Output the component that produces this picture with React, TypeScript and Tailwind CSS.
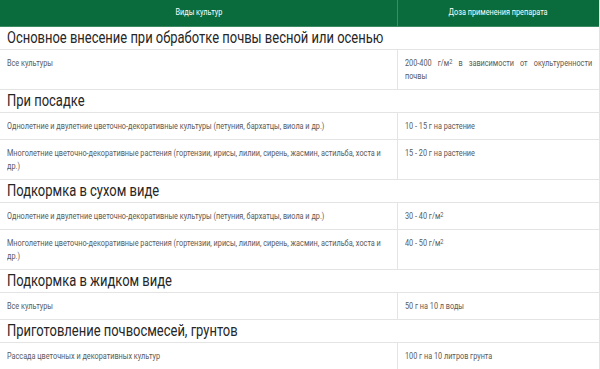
import React from "react";

type Row = { crop: React.ReactNode; dose: React.ReactNode; tall?: boolean };
type Section = { title: string; rows: Row[] };

// Roboto squeezed horizontally to stand in for Roboto Condensed
function Narrow({ w, className = "", children }: { w: string; className?: string; children: React.ReactNode }) {
  return <div className={`${w} origin-top-left scale-x-[0.81] ${className}`}>{children}</div>;
}

const Sup = () => <sup className="text-[7px] relative -top-[2px]">2</sup>;

const sections: Section[] = [
  {
    title: "Основное внесение при обработке почвы весной или осенью",
    rows: [
      {
        crop: "Все культуры",
        dose: (
          <span className="block text-justify [text-align-last:left]">
            200-400 г/м<Sup /> в зависимости от окультуренности почвы
          </span>
        ),
        tall: true,
      },
    ],
  },
  {
    title: "При посадке",
    rows: [
      { crop: "Однолетние и двулетние цветочно-декоративные культуры (петуния, бархатцы, виола и др.)", dose: "10 - 15 г на растение" },
      {
        crop: (
          <>
            Многолетние цветочно-декоративные растения (гортензии, ирисы, лилии, сирень, жасмин, астильба, хоста и<br />
            др.)
          </>
        ),
        dose: "15 - 20 г на растение",
        tall: true,
      },
    ],
  },
  {
    title: "Подкормка в сухом виде",
    rows: [
      {
        crop: "Однолетние и двулетние цветочно-декоративные культуры (петуния, бархатцы, виола и др.)",
        dose: (
          <>
            30 - 40 г/м<Sup />
          </>
        ),
      },
      {
        crop: (
          <>
            Многолетние цветочно-декоративные растения (гортензии, ирисы, лилии, сирень, жасмин, астильба, хоста и<br />
            др.)
          </>
        ),
        dose: (
          <>
            40 - 50 г/м<Sup />
          </>
        ),
        tall: true,
      },
    ],
  },
  {
    title: "Подкормка в жидком виде",
    rows: [{ crop: "Все культуры", dose: "50 г на 10 л воды" }],
  },
  {
    title: "Приготовление почвосмесей, грунтов",
    rows: [{ crop: "Рассада цветочных и декоративных культур", dose: "100 г на 10 литров грунта" }],
  },
];

export default function App() {
  return (
    <div className="w-[600px] h-[369px] overflow-hidden bg-white" style={{ fontFamily: "Roboto, 'Liberation Sans', sans-serif" }}>
      <div className="border-r border-[#e2e2e2]">
        <div className="flex h-[27px] bg-[#0a6b3c] text-white text-[9px] border-b border-[#3d8a63]">
          <div className="w-[398px] flex items-center justify-center border-r border-[#3d8a63]">
            <span className="inline-block scale-x-[0.81]">Виды культур</span>
          </div>
          <div className="flex-1 flex items-center justify-center">
            <span className="inline-block scale-x-[0.81]">Доза применения препарата</span>
          </div>
        </div>
        {sections.map((s) => (
          <div key={s.title}>
            <div className="h-[23px] px-[7px] flex items-center border-b border-[#e4e4e4] text-[16px] text-[#262626] leading-none overflow-hidden">
              <span className="inline-block whitespace-nowrap origin-left scale-x-[0.81]">{s.title}</span>
            </div>
            {s.rows.map((r, i) => (
              <div
                key={i}
                className={`flex border-b border-[#e4e4e4] text-[9px] leading-[13px] text-[#5a5a5a] ${r.tall ? "h-[40px]" : "h-[27px]"}`}
              >
                <div className="w-[398px] px-[7px] pt-[7px] border-r border-[#e4e4e4] overflow-hidden">
                  <Narrow w="w-[474px]">{r.crop}</Narrow>
                </div>
                <div className="flex-1 px-[7px] pt-[7px] overflow-hidden">
                  <Narrow w="w-[231px]">{r.dose}</Narrow>
                </div>
              </div>
            ))}
          </div>
        ))}
      </div>
    </div>
  );
}
